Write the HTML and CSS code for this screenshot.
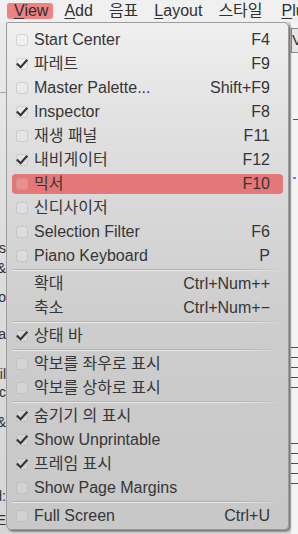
FILE: index.html
```html
<!DOCTYPE html>
<html>
<head>
<meta charset="utf-8">
<link rel="stylesheet" href="styles.css">
</head>
<body>
<div class="app">
  <div class="menubar">
    <span class="mb-item active"><u>V</u>iew</span>
    <span class="mb-item"><u>A</u>dd</span>
    <span class="mb-item">음표</span>
    <span class="mb-item"><u>L</u>ayout</span>
    <span class="mb-item">스타일</span>
    <span class="mb-item last"><u>P</u>lugins</span>
  </div>
  <div class="workspace">
    <div class="left-strip">
      <div class="rule r1"></div>
      <div class="frag f1"><span>Accidentals</span></div>
      <div class="frag f2"><span>Lines &amp;</span></div>
      <div class="frag f3"><span>Tempo</span></div>
      <div class="frag f4"><span>Dynamica</span></div>
      <div class="frag f5"><span>Fingeril</span></div>
      <div class="frag f6"><span>Repeats &amp; Jumc</span></div>
      <div class="frag f7"><span>Breaks &amp;</span></div>
      <div class="frag f8"><span>Fretboard:</span></div>
      <div class="frag f9"><span>Clefs E</span></div>
    </div>
    <div class="middle"></div>
    <div class="right-strip">
      <div class="tb-box">V</div>
      <div class="score">
        <div class="rule r2"></div>
        <div class="tick"></div>
        <div class="staff s1">
          <i></i><i></i><i></i><i></i><i></i>
        </div>
        <div class="staff s2">
          <i></i><i></i><i></i><i></i><i></i>
        </div>
      </div>
    </div>
  </div>

  <div class="menu">
    <div class="row"><div class="item"><span class="box"></span><span class="label">Start Center</span><span class="key">F4</span></div></div>
    <div class="row"><div class="item"><span class="box checked"><svg viewBox="0 0 12 12"><path d="M1.6 6.2 L4.6 9.3 L10.6 2.6"/></svg></span><span class="label">파레트</span><span class="key">F9</span></div></div>
    <div class="row"><div class="item"><span class="box"></span><span class="label">Master Palette...</span><span class="key">Shift+F9</span></div></div>
    <div class="row"><div class="item"><span class="box checked"><svg viewBox="0 0 12 12"><path d="M1.6 6.2 L4.6 9.3 L10.6 2.6"/></svg></span><span class="label">Inspector</span><span class="key">F8</span></div></div>
    <div class="row"><div class="item"><span class="box"></span><span class="label">재생 패널</span><span class="key">F11</span></div></div>
    <div class="row"><div class="item"><span class="box checked"><svg viewBox="0 0 12 12"><path d="M1.6 6.2 L4.6 9.3 L10.6 2.6"/></svg></span><span class="label">내비게이터</span><span class="key">F12</span></div></div>
    <div class="row"><div class="item hl"><span class="box"></span><span class="label">믹서</span><span class="key">F10</span></div></div>
    <div class="row"><div class="item"><span class="box"></span><span class="label">신디사이저</span><span class="key"></span></div></div>
    <div class="row"><div class="item"><span class="box"></span><span class="label">Selection Filter</span><span class="key">F6</span></div></div>
    <div class="row"><div class="item"><span class="box"></span><span class="label">Piano Keyboard</span><span class="key">P</span></div></div>
    <div class="sep"></div>
    <div class="row"><div class="item"><span class="nobox"></span><span class="label">확대</span><span class="key">Ctrl+Num++</span></div></div>
    <div class="row"><div class="item"><span class="nobox"></span><span class="label">축소</span><span class="key">Ctrl+Num+−</span></div></div>
    <div class="sep"></div>
    <div class="row"><div class="item"><span class="box checked"><svg viewBox="0 0 12 12"><path d="M1.6 6.2 L4.6 9.3 L10.6 2.6"/></svg></span><span class="label">상태 바</span><span class="key"></span></div></div>
    <div class="sep"></div>
    <div class="row"><div class="item"><span class="box"></span><span class="label">악보를 좌우로 표시</span><span class="key"></span></div></div>
    <div class="row"><div class="item"><span class="box"></span><span class="label">악보를 상하로 표시</span><span class="key"></span></div></div>
    <div class="sep"></div>
    <div class="row"><div class="item"><span class="box checked"><svg viewBox="0 0 12 12"><path d="M1.6 6.2 L4.6 9.3 L10.6 2.6"/></svg></span><span class="label">숨기기 의 표시</span><span class="key"></span></div></div>
    <div class="row"><div class="item"><span class="box checked"><svg viewBox="0 0 12 12"><path d="M1.6 6.2 L4.6 9.3 L10.6 2.6"/></svg></span><span class="label">Show Unprintable</span><span class="key"></span></div></div>
    <div class="row"><div class="item"><span class="box checked"><svg viewBox="0 0 12 12"><path d="M1.6 6.2 L4.6 9.3 L10.6 2.6"/></svg></span><span class="label">프레임 표시</span><span class="key"></span></div></div>
    <div class="row"><div class="item"><span class="box"></span><span class="label">Show Page Margins</span><span class="key"></span></div></div>
    <div class="sep"></div>
    <div class="row"><div class="item"><span class="box"></span><span class="label">Full Screen</span><span class="key">Ctrl+U</span></div></div>
  </div>
</div>
</body>
</html>
```

FILE: styles.css
```css
* { box-sizing: border-box; }
html, body {
  margin: 0;
  padding: 0;
}
body {
  width: 298px;
  height: 534px;
  overflow: hidden;
  font-family: "Liberation Sans", "Noto Sans CJK KR", sans-serif;
  font-size: 16px;
  color: #363636;
  background: #dcdcdc;
}
.app {
  position: relative;
  width: 298px;
  height: 534px;
  display: flex;
  flex-direction: column;
}
.menubar {
  height: 22px;
  display: flex;
  align-items: center;
  gap: 4px;
  padding-left: 7px;
  background: #f0f0f0;
  white-space: nowrap;
  overflow: hidden;
  flex: none;
}
.mb-item {
  height: 16px;
  line-height: 16px;
  padding: 0 5px 0 7px;
  border-radius: 3px;
  color: #303030;
}
.mb-item.last {
  margin-left: 3px;
}
.mb-item.active {
  background: #ee8282;
}
.mb-item u {
  text-underline-offset: 2px;
  text-decoration-thickness: 1px;
}

.workspace {
  flex: 1;
  display: flex;
}
.left-strip {
  width: 6px;
  background: linear-gradient(#ebebeb, #dedede 40%, #d6d6d6);
  overflow: hidden;
  display: flex;
  flex-direction: column;
  flex: none;
}
.left-strip .rule.r1 {
  height: 1px;
  background: #a8a8a8;
  margin-top: 70px;
}
.frag {
  display: flex;
  justify-content: flex-end;
  white-space: nowrap;
  font-size: 14px;
  line-height: 14px;
  height: 14px;
  color: #303030;
}
.frag span { flex: none; }
.f1 { margin-top: 148px; }
.f2 { margin-top: 6px; }
.f3 { margin-top: 15px; }
.f4 { margin-top: 23px; }
.f5 { margin-top: 26px; }
.f6 { margin-top: 4px; }
.f7 { margin-top: 16px; }
.f8 { margin-top: 60px; }
.f9 { margin-top: 10px; }

.middle {
  flex: 1;
  background: #d8d8d8;
}
.right-strip {
  width: 7px;
  flex: none;
  display: flex;
  flex-direction: column;
  background: #f3f3f3;
  overflow: hidden;
}
.tb-box {
  margin-top: 6px;
  height: 25px;
  border-top: 1px solid #8c8c8c;
  border-left: 1px solid #8c8c8c;
  border-bottom: 1px solid #8c8c8c;
  background: #e6e6e6;
  font-size: 15px;
  line-height: 22px;
  padding-left: 0;
  color: #333;
  white-space: nowrap;
}
.score {
  flex: 1;
  display: flex;
  flex-direction: column;
  background: #f4f4f4;
}
.score .rule.r2 {
  height: 1px;
  margin-top: 66px;
  background: #555;
  margin-left: 2px;
}
.tick {
  height: 2px;
  width: 3px;
  margin-left: 2px;
  margin-top: 57px;
  background: #4a90e2;
}
.staff {
  display: flex;
  flex-direction: column;
  gap: 9px;
}
.staff i {
  display: block;
  height: 1px;
  background: #4a4a4a;
}
.s1 { margin-top: 168px; }
.s2 { margin-top: 55px; }

/* Dropdown menu (overlay) */
.menu {
  position: absolute;
  left: 6px;
  top: 22px;
  width: 283px;
  height: 508px;
  padding: 5px 0 4px;
  border: 1px solid #9c9c9c;
  border-radius: 2px 5px 5px 5px;
  background: linear-gradient(#f0f0f0 0%, #e2e2e2 18%, #d6d6d6 40%, #cdcdcd 60%, #c8c8c8 100%);
  box-shadow: 2px 2px 2px rgba(0, 0, 0, 0.35), 1px 1px 0 rgba(0, 0, 0, 0.15);
  display: flex;
  flex-direction: column;
}
.row {
  height: 24px;
  padding: 2px 5px;
  flex: none;
}
.item {
  height: 20px;
  display: flex;
  align-items: center;
  padding: 0 13px 0 4px;
  border-radius: 4px;
  white-space: nowrap;
}
.item.hl {
  background: #e47777;
}
.box, .nobox {
  width: 12px;
  height: 12px;
  flex: none;
  margin-right: 6px;
}
.box {
  border: 1px solid rgba(150, 150, 150, 0.3);
  border-radius: 3px;
  background: rgba(255, 255, 255, 0.18);
  position: relative;
}
.box svg {
  position: absolute;
  left: -1px;
  top: -1px;
  width: 12px;
  height: 12px;
  overflow: visible;
}
.box svg path {
  fill: none;
  stroke: #333;
  stroke-width: 2.1;
  stroke-linecap: square;
  stroke-linejoin: miter;
}
.label {
  flex: 1;
  line-height: 20px;
  color: #363636;
}
.key {
  line-height: 20px;
  color: #363636;
}
.sep {
  height: 4px;
  flex: none;
  margin: 0 4px 0 6px;
  padding-top: 1px;
}
.sep::before {
  content: "";
  display: block;
  height: 1px;
  background: linear-gradient(90deg, #b4b4b4 0%, #b4b4b4 85%, rgba(180,180,180,0) 100%);
}
.sep::after {
  content: "";
  display: block;
  height: 1px;
  background: linear-gradient(90deg, #e8e8e8 0%, #e8e8e8 85%, rgba(232,232,232,0) 100%);
}
```
